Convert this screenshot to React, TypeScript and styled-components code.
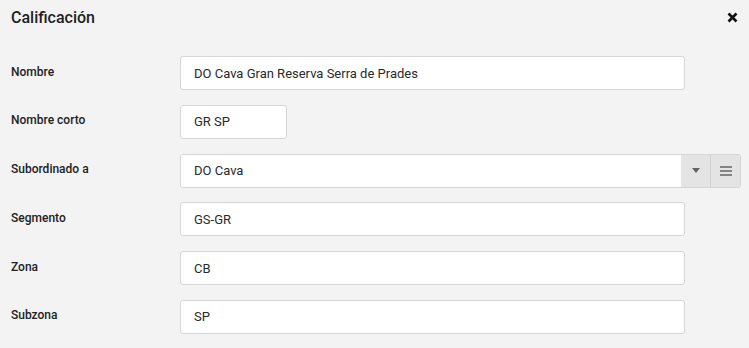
import React from 'react'
import styled, { createGlobalStyle } from 'styled-components'

const GlobalStyle = createGlobalStyle`
  html, body {
    margin: 0;
    padding: 0;
    background: #f3f3f3;
  }
  body {
    font-family: Roboto, "Liberation Sans", Arial, sans-serif;
    color: #212121;
  }
`

type Field = {
  label: string
  value: string
  width?: number
  select?: boolean
}

const fields: Field[] = [
  { label: 'Nombre', value: 'DO Cava Gran Reserva Serra de Prades' },
  { label: 'Nombre corto', value: 'GR SP', width: 107 },
  { label: 'Subordinado a', value: 'DO Cava', select: true },
  { label: 'Segmento', value: 'GS-GR' },
  { label: 'Zona', value: 'CB' },
  { label: 'Subzona', value: 'SP' },
]

export default function App() {
  return (
    <>
      <GlobalStyle />
      <Dialog>
        <Header>
          <Title>Calificación</Title>
          <CloseButton aria-label="Cerrar">
            <svg width="11" height="11" viewBox="0 0 11 11">
              <path d="M1.5 1.5 L9.5 9.5 M9.5 1.5 L1.5 9.5" stroke="#111" strokeWidth="2.6" />
            </svg>
          </CloseButton>
        </Header>
        <Form>
          {fields.map(f => (
            <Row key={f.label}>
              <Label>{f.label}</Label>
              {f.select ? (
                <SelectGroup>
                  <SelectValue>{f.value}</SelectValue>
                  <Addon>
                    <svg width="8" height="5" viewBox="0 0 8 5">
                      <path d="M0 0 H8 L4 5 Z" fill="#666" />
                    </svg>
                  </Addon>
                  <Addon $divider>
                    <svg width="12" height="10" viewBox="0 0 12 10">
                      <path d="M0 1 H12 M0 5 H12 M0 9 H12" stroke="#666" strokeWidth="1.6" />
                    </svg>
                  </Addon>
                </SelectGroup>
              ) : (
                <TextBox $width={f.width ?? 505}>{f.value}</TextBox>
              )}
            </Row>
          ))}
        </Form>
      </Dialog>
    </>
  )
}

const Dialog = styled.div`
  width: 749px;
  height: 348px;
  box-sizing: border-box;
  padding: 0 8px 0 11px;
  background: #f3f3f3;
  overflow: hidden;
`

const Header = styled.div`
  height: 34px;
  display: flex;
  align-items: center;
  justify-content: space-between;
`

const Title = styled.h2`
  margin: 0;
  font-size: 16px;
  font-weight: 500;
  color: #1e1e1e;
`

const CloseButton = styled.div`
  width: 14px;
  height: 14px;
  display: flex;
  align-items: center;
  justify-content: center;
  margin-right: 2px;
  cursor: pointer;
`

const Form = styled.div`
  margin-top: 22px;
  display: flex;
  flex-direction: column;
  gap: 14.8px;
`

const Row = styled.div`
  height: 34px;
  display: flex;
  align-items: center;
`

const Label = styled.div`
  width: 169px;
  flex-shrink: 0;
  font-size: 12px;
  font-weight: 500;
  color: #222;
  margin-top: -3px;
`

const TextBox = styled.div<{ $width: number }>`
  width: ${p => p.$width}px;
  height: 34px;
  box-sizing: border-box;
  padding: 0 13px;
  display: flex;
  align-items: center;
  background: #fff;
  border: 1px solid #d6d6d6;
  border-radius: 3px;
  font-size: 13px;
  color: #2a2a2a;
`

const SelectGroup = styled.div`
  width: 561px;
  height: 34px;
  display: flex;
  box-sizing: border-box;
  border: 1px solid #d6d6d6;
  border-radius: 3px;
  overflow: hidden;
`

const SelectValue = styled.div`
  flex: 1;
  background: #fff;
  padding: 0 13px;
  display: flex;
  align-items: center;
  font-size: 13px;
  color: #2a2a2a;
`

const Addon = styled.div<{ $divider?: boolean }>`
  width: 29px;
  display: flex;
  align-items: center;
  justify-content: center;
  background: #e4e4e4;
  border-left: ${p => (p.$divider ? '1px solid #d0d0d0' : 'none')};
`
